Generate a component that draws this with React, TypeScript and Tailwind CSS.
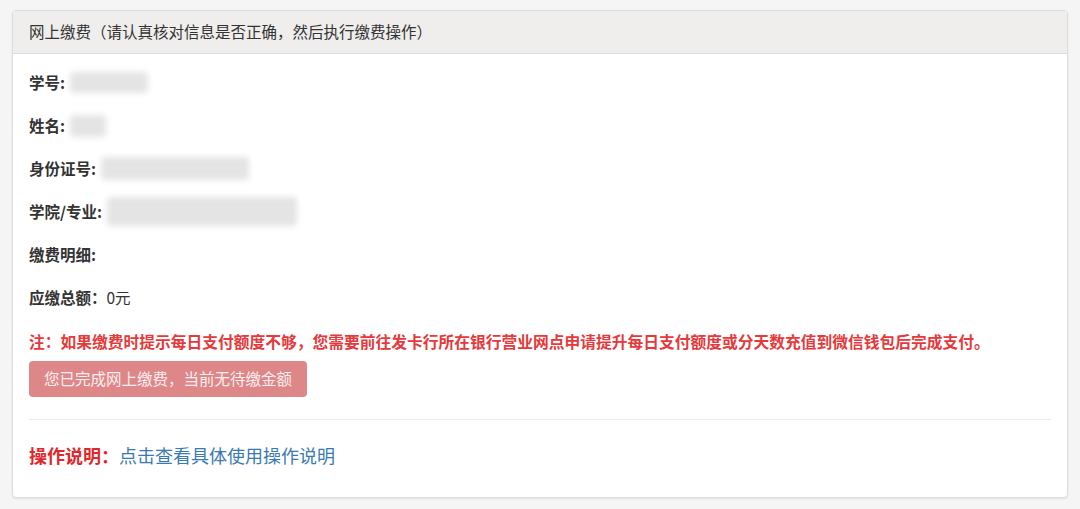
import React from 'react';

const font = { fontFamily: '"Noto Sans CJK SC", "Noto Sans", sans-serif' };

interface InfoRowProps {
  label: string;
  blurWidth?: number;
  blurHeight?: number;
  value?: string;
}

// blurred placeholder where the real value was masked in the screenshot
const Masked: React.FC<{ w: number; h: number }> = ({ w, h }) => (
  <span className="inline-block ml-[5px] relative" style={{ width: w, height: h }}>
    <span className="absolute inset-0 bg-[#e4e4e4] blur-[3px] rounded-sm" />
  </span>
);

const InfoRow: React.FC<InfoRowProps> = ({ label, blurWidth, blurHeight, value }) => (
  <div className="h-[43px] flex items-center text-[15.5px] text-[#333]">
    <span className="font-bold">{label}</span>
    {blurWidth ? <Masked w={blurWidth} h={blurHeight ?? 22} /> : null}
    {value ? <span className="ml-[2px]">{value}</span> : null}
  </div>
);

export default function App() {
  return (
    <div className="w-[1080px] h-[509px] bg-[#f6f5f5] pt-[10px] px-[12px] overflow-hidden" style={font}>
      <div className="h-[488px] bg-white border border-[#dcdcdc] rounded-[4px] shadow-[0_1px_2px_rgba(0,0,0,0.08)] flex flex-col overflow-hidden">
        <div className="h-[43px] shrink-0 bg-[#efeeed] border-b border-[#dddddd] flex items-center px-4 text-[15.5px] text-[#333]">
          网上缴费（请认真核对信息是否正确，然后执行缴费操作）
        </div>

        <div className="px-4 pt-[7px]">
          <InfoRow label="学号:" blurWidth={78} blurHeight={21} />
          <InfoRow label="姓名:" blurWidth={36} blurHeight={22} />
          <InfoRow label="身份证号:" blurWidth={148} blurHeight={23} />
          <InfoRow label="学院/专业:" blurWidth={190} blurHeight={29} />
          <InfoRow label="缴费明细:" />
          <div className="h-[43px] flex items-center text-[15.5px] text-[#333]">
            <span className="font-bold">应缴总额：</span>
            <span>0元</span>
          </div>

          <p className="mt-[12px] leading-[22px] text-[15.75px] font-bold text-[#e5393b]">
            注：如果缴费时提示每日支付额度不够，您需要前往发卡行所在银行营业网点申请提升每日支付额度或分天数充值到微信钱包后完成支付。
          </p>

          <button
            disabled
            className="mt-[8px] h-[36px] px-[15px] rounded-[4px] bg-[#dd8789] text-[15.5px] text-[#fbeeee] cursor-not-allowed"
          >
            您已完成网上缴费，当前无待缴金额
          </button>

          <hr className="mt-[22px] border-0 border-t border-[#ececec]" />

          <div className="mt-[22px] h-[26px] flex items-center text-[18px]">
            <span className="font-bold text-[#e0282c]">操作说明：</span>
            <a href="#" className="text-[#3a7ab3]">点击查看具体使用操作说明</a>
          </div>
        </div>
      </div>
    </div>
  );
}
